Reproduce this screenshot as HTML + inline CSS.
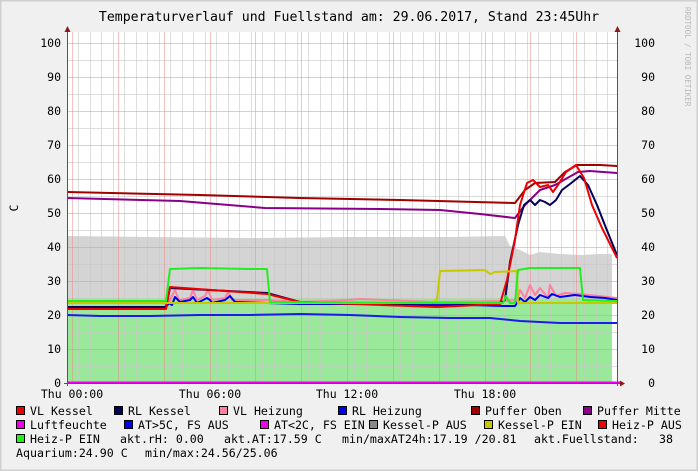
<!DOCTYPE html><html><head><style>html,body{margin:0;padding:0;background:#f0f0f0}svg{display:block}text{font-family:"DejaVu Sans Mono","Liberation Mono",monospace;white-space:pre}</style></head><body>
<svg width="698" height="471" xmlns="http://www.w3.org/2000/svg">
<rect x="0" y="0" width="698" height="471" fill="#f0f0f0"/>
<rect x="0.5" y="0.5" width="697" height="470" fill="none" stroke="#cfcfcf" stroke-width="2"/>
<text x="349" y="21" font-size="13.2" text-anchor="middle" fill="#000">Temperaturverlauf und Fuellstand am: 29.06.2017, Stand 23:45Uhr</text>
<text font-size="7.5" fill="#b8b8b8" transform="translate(685,7) rotate(90)">RRDTOOL / TOBI OETIKER</text>
<rect x="67" y="32" width="550" height="351" fill="#fff"/>
<polygon fill="#d4d4d4" points="67,236 150,237 250,238 350,237 450,237 505,236 510,246 520,250 530,255 540,252 560,254 580,255 600,254 612,254 612,383 67,383"/>
<polygon fill="#9ae89a" points="67,298 612,298 612,383 67,383"/>
<g stroke-width="1">
<g stroke="#c8c8c8" stroke-opacity="0.6">
<path d="M78.5 32V383M90.5 32V383M101.5 32V383M113.5 32V383M124.5 32V383M136.5 32V383M147.5 32V383M159.5 32V383M170.5 32V383M182.5 32V383M193.5 32V383M205.5 32V383M216.5 32V383M228.5 32V383M239.5 32V383M251.5 32V383M262.5 32V383M274.5 32V383M285.5 32V383M297.5 32V383M308.5 32V383M320.5 32V383M331.5 32V383M343.5 32V383M354.5 32V383M366.5 32V383M377.5 32V383M389.5 32V383M400.5 32V383M412.5 32V383M423.5 32V383M435.5 32V383M446.5 32V383M458.5 32V383M469.5 32V383M481.5 32V383M492.5 32V383M504.5 32V383M515.5 32V383M527.5 32V383M538.5 32V383M550.5 32V383M561.5 32V383M573.5 32V383M584.5 32V383M596.5 32V383M607.5 32V383"/>
<path d="M67 366.5H617M67 332.5H617M67 298.5H617M67 264.5H617M67 230.5H617M67 196.5H617M67 162.5H617M67 128.5H617M67 94.5H617M67 60.5H617"/>
</g>
<g stroke="#ee8888" stroke-opacity="0.5">
<path d="M72.5 32V383M118.5 32V383M164.5 32V383M210.5 32V383M255.5 32V383M301.5 32V383M347.5 32V383M393.5 32V383M439.5 32V383M485.5 32V383M530.5 32V383M576.5 32V383"/>
<path d="M67 349.5H617M67 315.5H617M67 281.5H617M67 247.5H617M67 213.5H617M67 179.5H617M67 145.5H617M67 111.5H617M67 77.5H617M67 43.5H617"/>
</g>
</g>
<g fill="none" stroke-width="2" stroke-linejoin="round">
<polyline stroke="#1a1aee" points="67,315 100,316 150,316 200,315 250,315 300,314 350,315 400,317 450,318 490,318 520,321 560,323 590,323 617,323"/>
<polyline stroke="#a00000" points="67,192 200,195 300,198 400,200 515,203 525,190 535,183 555,182 565,172 577,165 600,165 617,166"/>
<polyline stroke="#880088" points="67,198 180,201 265,208 380,209 440,210 480,214 515,218 525,205 540,190 555,185 578,172 590,171 617,173"/>
<polyline stroke="#ff80a0" points="67,307 165,307 170,300 175,290 179,300 190,298 193,290 197,300 205,296 208,290 212,300 225,298 228,292 232,300 267,300 300,302 347,300 360,299 437,302 503,301 517,300 520,290 525,298 530,285 535,295 540,288 548,298 550,285 556,296 565,293 580,294 617,298"/>
<polyline stroke="#0000ee" points="67,307 166,307 169,303 172,305 175,297 180,302 190,300 193,297 197,303 207,298 210,300 212,303 225,300 230,296 235,302 267,303 300,304 437,304 503,306 515,306 520,298 525,302 530,297 535,300 540,295 548,298 552,294 560,297 575,295 590,297 605,298 617,300"/>
<polyline stroke="#00005a" points="67,307 166,307 170,288 267,293 300,302 437,306 500,304 505,300 510,262 518,225 524,205 530,200 535,205 540,200 545,202 550,205 556,200 562,190 570,184 580,176 588,185 597,205 606,228 617,255"/>
<polyline stroke="#ee0000" points="67,309 166,309 170,287 267,294 300,302 437,307 500,304 507,280 515,240 520,205 527,183 533,180 540,187 548,185 553,192 558,185 566,172 576,165 584,178 592,205 602,228 617,258"/>
<polyline stroke="#c8c800" points="67,303 430,303 437,300 440,271 485,270 490,274 495,272 517,271 518,303 617,303"/>
<polyline stroke="#22ee22" points="67,301 166,301 170,269 200,268 250,269 267,269 270,302 440,303 503,303 506,296 510,303 515,303 518,270 530,268 580,268 583,300 617,301"/>
<line x1="67" y1="382.5" x2="620" y2="382.5" stroke="#ee00ee"/>
</g>
<line x1="67.5" y1="28" x2="67.5" y2="386" stroke="#555"/>
<line x1="617.5" y1="28" x2="617.5" y2="386" stroke="#555"/>
<line x1="64" y1="383.5" x2="621" y2="383.5" stroke="#555"/>
<polygon points="64.5,32 67.5,26 70.5,32" fill="#8b1a1a"/>
<polygon points="614.5,32 617.5,26 620.5,32" fill="#8b1a1a"/>
<polygon points="620,380.5 625,383.5 620,386.5" fill="#8b1a1a"/>
<g font-size="11.5" fill="#000" text-anchor="end">
<text x="61" y="47">100</text><text x="61" y="81">90</text><text x="61" y="115">80</text><text x="61" y="149">70</text><text x="61" y="183">60</text><text x="61" y="217">50</text><text x="61" y="251">40</text><text x="61" y="285">30</text><text x="61" y="319">20</text><text x="61" y="353">10</text><text x="61" y="387">0</text>
<text x="655" y="47">100</text><text x="655" y="81">90</text><text x="655" y="115">80</text><text x="655" y="149">70</text><text x="655" y="183">60</text><text x="655" y="217">50</text><text x="655" y="251">40</text><text x="655" y="285">30</text><text x="655" y="319">20</text><text x="655" y="353">10</text><text x="655" y="387">0</text>
</g>
<text font-size="11.5" transform="translate(18,208) rotate(-90)" text-anchor="middle">C</text>
<g font-size="11.5" text-anchor="middle"><text x="72" y="398">Thu 00:00</text><text x="210" y="398">Thu 06:00</text><text x="347" y="398">Thu 12:00</text><text x="485" y="398">Thu 18:00</text></g>
<g stroke="#000" stroke-width="1">
<rect x="16.5" y="406.5" width="8" height="8" fill="#ee0000"/><rect x="114.5" y="406.5" width="8" height="8" fill="#00005a"/><rect x="219.5" y="406.5" width="8" height="8" fill="#ff80a0"/><rect x="338.5" y="406.5" width="8" height="8" fill="#0000ee"/><rect x="471.5" y="406.5" width="8" height="8" fill="#a00000"/><rect x="583.5" y="406.5" width="8" height="8" fill="#880088"/>
<rect x="16.5" y="420.5" width="8" height="8" fill="#ee00ee"/><rect x="124.5" y="420.5" width="8" height="8" fill="#0000ee"/><rect x="260.5" y="420.5" width="8" height="8" fill="#ee00ee"/><rect x="369.5" y="420.5" width="8" height="8" fill="#888"/><rect x="484.5" y="420.5" width="8" height="8" fill="#c8c800"/><rect x="598.5" y="420.5" width="8" height="8" fill="#ee0000"/>
<rect x="16.5" y="434.5" width="8" height="8" fill="#22ee22"/>
</g>
<g font-size="11.6" fill="#000">
<text x="30" y="415">VL Kessel</text><text x="128" y="415">RL Kessel</text><text x="233" y="415">VL Heizung</text><text x="352" y="415">RL Heizung</text><text x="485" y="415">Puffer Oben</text><text x="597" y="415">Puffer Mitte</text>
<text x="30" y="429">Luftfeuchte</text><text x="138" y="429">AT&gt;5C, FS AUS</text><text x="274" y="429">AT&lt;2C, FS EIN</text><text x="383" y="429">Kessel-P AUS</text><text x="498" y="429">Kessel-P EIN</text><text x="612" y="429">Heiz-P AUS</text>
<text x="30" y="443">Heiz-P EIN</text><text x="120" y="443">akt.rH: 0.00</text><text x="224" y="443">akt.AT:17.59 C</text><text x="342" y="443">min/maxAT24h:17.19 /20.81</text><text x="534" y="443">akt.Fuellstand:</text><text x="659" y="443">38</text>
<text x="16" y="457">Aquarium:24.90 C</text><text x="145" y="457">min/max:24.56/25.06</text>
</g>
</svg>
</body></html>
